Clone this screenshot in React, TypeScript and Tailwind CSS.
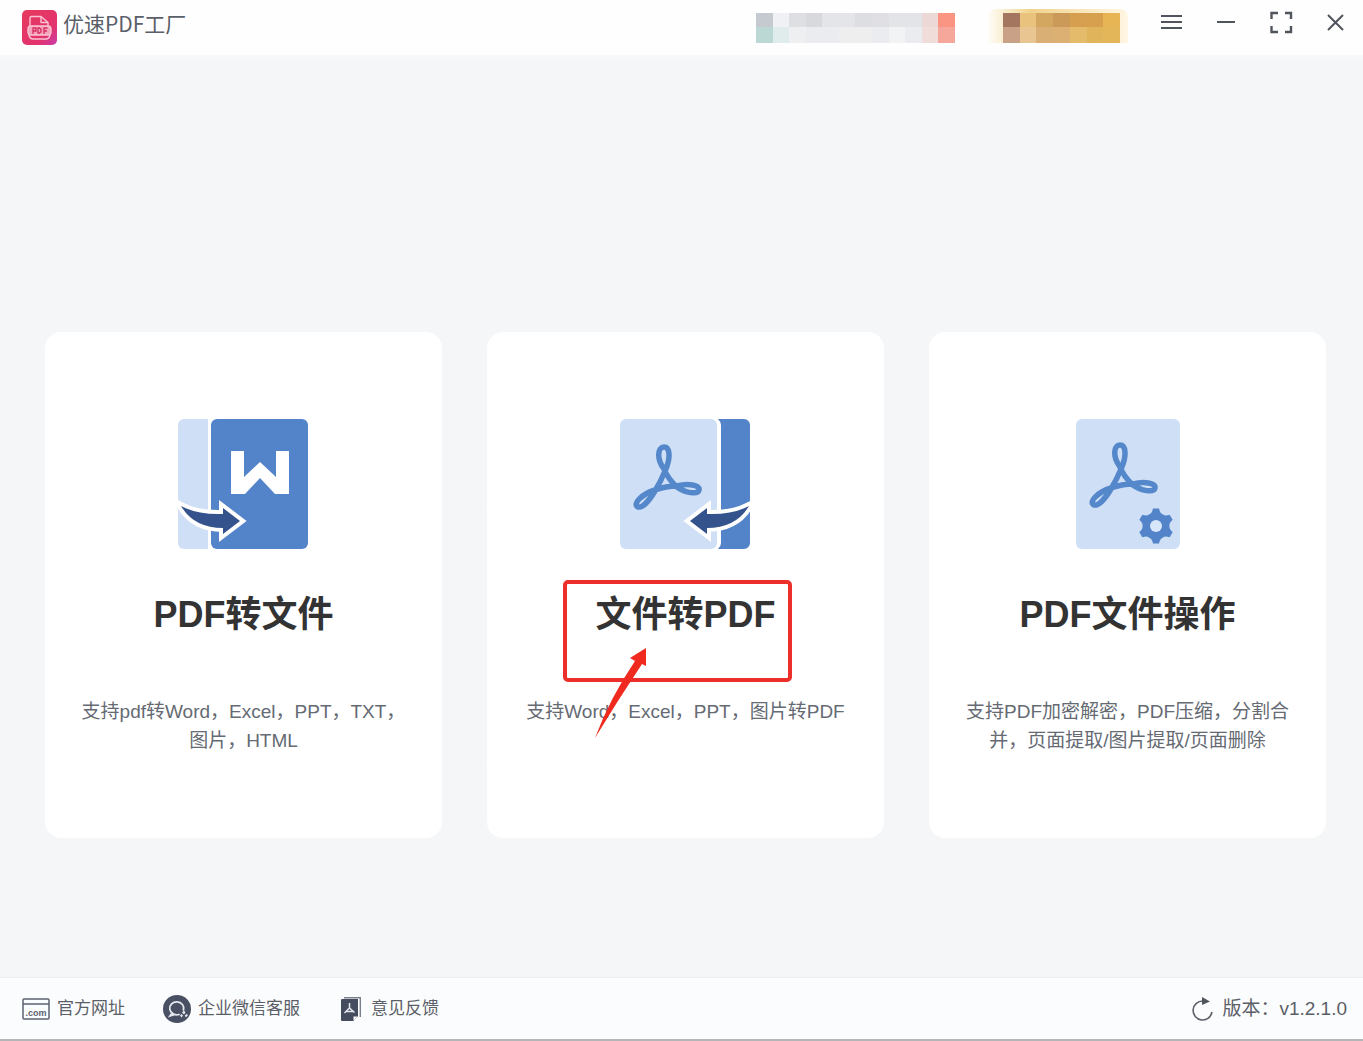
import type { ReactNode } from "react"

const bannerTop = [
  "bg-[#c4cad0]", "bg-[#f0f1f4]", "bg-[#dedfe3]", "bg-[#d8d9dc]", "bg-[#e4e5e9]", "bg-[#e4e5e9]",
  "bg-[#dddee1]", "bg-[#e0e0e4]", "bg-[#e3e4e8]", "bg-[#e3e4e8]", "bg-[#edd8d8]", "bg-[#f99582]",
]
const bannerBottom = [
  "bg-[#bcd8d5]", "bg-[#e0ebeb]", "bg-[#eeeff1]", "bg-[#ebecef]", "bg-[#ebecef]", "bg-[#eeeeee]",
  "bg-[#eeeeee]", "bg-[#ebecef]", "bg-[#f2f3f5]", "bg-[#ebecef]", "bg-[#f0dcd9]", "bg-[#f5a79b]",
]
const vipTop = ["bg-[#a47660]", "bg-[#e9c27d]", "bg-[#d3a760]", "bg-[#cb9a58]", "bg-[#d69f50]", "bg-[#d6a04e]", "bg-[#e8b554]"]
const vipBottom = ["bg-[#c8a186]", "bg-[#e9c592]", "bg-[#d9af76]", "bg-[#dcb072]", "bg-[#e3bb6a]", "bg-[#dfb45a]", "bg-[#e4b65a]"]

function Pixels({ colors, className }: { colors: string[]; className: string }) {
  return (
    <div className={`flex ${className}`}>
      {colors.map((color, i) => (
        <span key={i} className={`flex-1 ${color}`} />
      ))}
    </div>
  )
}

function Logo() {
  return (
    <svg className="size-[35px]" viewBox="0 0 35 35" fill="none" aria-hidden="true">
      <defs>
        <linearGradient id="logo" x1="0" y1="0" x2="1" y2="1">
          <stop offset="0" stopColor="#e63a5c" />
          <stop offset=".7" stopColor="#e2336f" />
          <stop offset="1" stopColor="#c93cab" />
        </linearGradient>
      </defs>
      <rect width="35" height="35" rx="5" fill="url(#logo)" />
      <g stroke="#f9c3d2" strokeWidth="1.4" strokeLinejoin="round" strokeLinecap="round">
        <path d="M8 16V8a1.500 1.500 0 0 1 1.500-1.500H19l7 6V16M19 6.500v6h7" />
        <rect x="6" y="16" width="23" height="9" rx="3" fill="#f3a3ba" />
        <path d="M7 25q1 4 4 4h13q3 0 4-4" />
      </g>
      <path d="M11 24v-6h3v3H11M16 18v5h1.500l1.500-1.200v-2.600L17.500 18zM22 24v-6h3.500M22 21h3" stroke="#d92a60" strokeWidth="1.300" />
    </svg>
  )
}

function Acrobat() {
  return (
    <path
      d="M44 50C36 39 38 28 44 28S51 39 45 52Q41 62 35 72C29 82 22 89 18 88 12 85 22 75 35 71Q46 67 57 67C68 64 80 66 79 71 78 76 65 74 57 68Q48 60 44 50Z"
      fill="none"
      stroke="#5588cb"
      strokeWidth="5.500"
      strokeLinejoin="round"
    />
  )
}

function CurvedArrow() {
  return (
    <path
      d="M3 87Q20 96 45 95V89L62 102 45 115V109Q16 109 3 87Z"
      fill="#34528b"
      stroke="#fff"
      strokeWidth="8"
      paintOrder="stroke"
    />
  )
}

function PdfToFileIcon() {
  return (
    <svg className="h-[131px] w-[131px]" viewBox="0 0 131 131" aria-hidden="true">
      <path d="M6 0H30V130H6a6 6 0 0 1-6-6V6a6 6 0 0 1 6-6Z" fill="#cfdff6" />
      <rect x="33" width="97" height="130" rx="6" fill="#5384c9" />
      <path d="M53 32H66V58L82 43 98 58V32H111V75H97L82 59 67 75H53Z" fill="#fff" />
      <CurvedArrow />
    </svg>
  )
}

function FileToPdfIcon() {
  return (
    <svg className="h-[131px] w-[131px]" viewBox="0 0 131 131" aria-hidden="true">
      <path d="M98 0H124a6 6 0 0 1 6 6V124a6 6 0 0 1-6 6H98q3-3 3-6V6q0-3-3-6Z" fill="#5384c9" />
      <rect width="97" height="130" rx="6" fill="#cfdff6" />
      <Acrobat />
      <g transform="translate(132 0) scale(-1 1)">
        <CurvedArrow />
      </g>
    </svg>
  )
}

function PdfToolsIcon() {
  return (
    <svg className="h-[131px] w-[104px]" viewBox="0 0 104 131" aria-hidden="true">
      <rect width="104" height="130" rx="6" fill="#cfdff6" />
      <g transform="translate(0 -2)">
        <Acrobat />
      </g>
      <g transform="translate(80 107)" fill="#5384c9">
        <circle r="13.500" />
        {[0, 60, 120, 180, 240, 300].map((deg) => (
          <path key={deg} d="M-9-9Q-4-12-3-17.500H3Q4-12 9-9Z" transform={`rotate(${deg})`} />
        ))}
        <circle r="6" fill="#d8e6f9" />
      </g>
    </svg>
  )
}

// Red frame and arrow drawn around the highlighted title
function Highlight() {
  return (
    <svg
      className="pointer-events-none absolute -top-[17px] -left-[35px] h-[162px] w-[236px] max-w-none"
      viewBox="0 0 236 162"
      aria-hidden="true"
    >
      <rect x="5" y="4" width="225" height="98" rx="3" fill="none" stroke="#ec2f2b" strokeWidth="4" />
      <path d="M86 70 70 80 75 83Q50 120 35 160 58 122 82 86L86 88Z" fill="#f02a1f" />
    </svg>
  )
}

type CardProps = {
  icon: ReactNode
  title: string
  text: string[]
  highlighted?: boolean
}

function Card({ icon, title, text, highlighted }: CardProps) {
  return (
    <button className="flex flex-col items-center rounded-2xl bg-white px-4 pt-[87px] pb-[83px]">
      {icon}
      <span className="relative mt-[45px] text-4xl leading-10 font-bold text-[#333]">
        {title}
        {highlighted && <Highlight />}
      </span>
      <span className="mt-[62px] text-[19px] leading-[29px] whitespace-nowrap text-[#656a73]">
        {text.map((line) => (
          <span key={line} className="block">{line}</span>
        ))}
      </span>
    </button>
  )
}

function WindowControls() {
  return (
    <div className="ml-[31px] flex items-center gap-[31px] text-[#50545c]">
      <button aria-label="菜单" className="size-6">
        <svg viewBox="0 0 24 24" stroke="currentColor" strokeWidth="2">
          <path d="M2 5h21M2 11h21M2 17h21" />
        </svg>
      </button>
      <button aria-label="最小化" className="size-6">
        <svg viewBox="0 0 24 24" stroke="currentColor" strokeWidth="2">
          <path d="M3 11h18" />
        </svg>
      </button>
      <button aria-label="最大化" className="size-6">
        <svg viewBox="0 0 24 24" fill="none" stroke="currentColor" strokeWidth="2.400">
          <path d="M2.500 8V2H9M16 2h6v6M22 15v6H16M9 21H2.500V15" />
        </svg>
      </button>
      <button aria-label="关闭" className="size-6">
        <svg viewBox="0 0 24 24" stroke="currentColor" strokeWidth="2">
          <path d="M4 4l15 15M19 4 4 19" />
        </svg>
      </button>
    </div>
  )
}

function Header() {
  return (
    <header className="flex h-[55px] shrink-0 items-center bg-[#fefefe] pr-[15px] pl-[22px] pb-[9px]">
      <div className="flex items-center gap-[6px] pt-2">
        <Logo />
        <h1 className="pb-2 font-['Noto_Sans_CJK_SC',sans-serif] text-[21px] leading-8 text-[#5a5f6a]">优速PDF工厂</h1>
      </div>
      <div className="ml-auto flex items-end pt-[5px]">
        <div className="w-[199px]">
          <Pixels colors={bannerTop} className="h-[14px]" />
          <Pixels colors={bannerBottom} className="h-4" />
        </div>
        <div className="ml-[33px] w-[140px] rounded-t-lg bg-linear-to-r from-[#fffdf8] via-[#f0d38a] via-30% to-[#fff6e3] pt-1 pr-2 pl-[15px]">
          <Pixels colors={vipTop} className="h-[14px]" />
          <Pixels colors={vipBottom} className="h-4" />
        </div>
      </div>
      <WindowControls />
    </header>
  )
}

function Footer() {
  return (
    <footer className="flex h-[64px] shrink-0 items-center border-t border-b-2 border-t-[#eceef0] border-b-[#b4b5b7] bg-[#fbfcfd] pt-px pr-4 pl-[22px] text-[17px] text-[#5b5f68]">
      <a href="#" className="flex items-center gap-[7px]">
        <svg className="h-[22px] w-7" viewBox="0 0 28 22" fill="none" stroke="#5d6270" strokeWidth="1.500" aria-hidden="true">
          <rect x="1" y="1" width="26" height="20" rx="1" />
          <path d="M1 6h26" />
          <text x="14" y="18" textAnchor="middle" fill="#5d6270" stroke="none" fontSize="9" fontWeight="bold">.com</text>
        </svg>
        官方网址
      </a>
      <button className="ml-[38px] flex items-center gap-[7px]">
        <svg className="size-7" viewBox="0 0 28 28" fill="none" aria-hidden="true">
          <circle cx="14" cy="14" r="14" fill="#4a5063" />
          <path d="M20.500 15A7 6.500 0 1 0 16 19.500M9 18l-2 3 5-1.500" stroke="#e4e7ee" strokeWidth="1.800" strokeLinecap="round" />
          <path d="M21 15.500l1.500 2-1.500 2-2-2ZM18.500 19l1.500 1.500-1.500 2-1.500-2ZM23.500 19l1.500 1-2 2.500-1.200-2Z" fill="#e4e7ee" />
        </svg>
        企业微信客服
      </button>
      <button className="ml-10 flex items-center gap-[9px]">
        <svg className="h-6 w-[22px]" viewBox="0 0 22 24" fill="none" aria-hidden="true">
          <path d="M4 .7H20.300V20" stroke="#7a7f8c" strokeWidth="1.400" />
          <path d="M2 2H18V19L13 24H2a1 1 0 0 1-1-1V3a1 1 0 0 1 1-1Z" fill="#464c60" />
          <path d="M13 24v-5h5" fill="#fff" stroke="#464c60" />
          <path d="M9.500 6v5l-5 5M9.500 11l5 4.500M6 14.500h8" stroke="#e6e8ef" strokeWidth="1.500" />
        </svg>
        意见反馈
      </button>
      <button className="ml-auto flex items-center gap-[6px] text-[19px]">
        <svg className="size-6" viewBox="0 0 24 24" fill="none" aria-hidden="true">
          <path d="M11 4A9.500 9.500 0 1 0 20 15" stroke="#5b5f68" strokeWidth="1.600" />
          <path d="M10 0 18 4.500 10 8Z" fill="#50545c" />
        </svg>
        版本：v1.2.1.0
      </button>
    </footer>
  )
}

export default function App() {
  return (
    <div className="flex min-h-screen flex-col bg-[#f4f6f8] font-['Liberation_Sans','Noto_Sans_CJK_SC',sans-serif]">
      <Header />
      <main className="flex flex-1 items-center bg-linear-to-b from-[#f8f9fa] to-[#f4f6f8] to-1% pt-[138px] pr-[37px] pl-[45px]">
        <div className="grid flex-1 grid-cols-3 gap-[45px]">
          <Card
            icon={<PdfToFileIcon />}
            title="PDF转文件"
            text={["支持pdf转Word，Excel，PPT，TXT，", "图片，HTML"]}
          />
          <Card icon={<FileToPdfIcon />} title="文件转PDF" text={["支持Word，Excel，PPT，图片转PDF"]} highlighted />
          <Card
            icon={<PdfToolsIcon />}
            title="PDF文件操作"
            text={["支持PDF加密解密，PDF压缩，分割合", "并，页面提取/图片提取/页面删除"]}
          />
        </div>
      </main>
      <Footer />
    </div>
  )
}
